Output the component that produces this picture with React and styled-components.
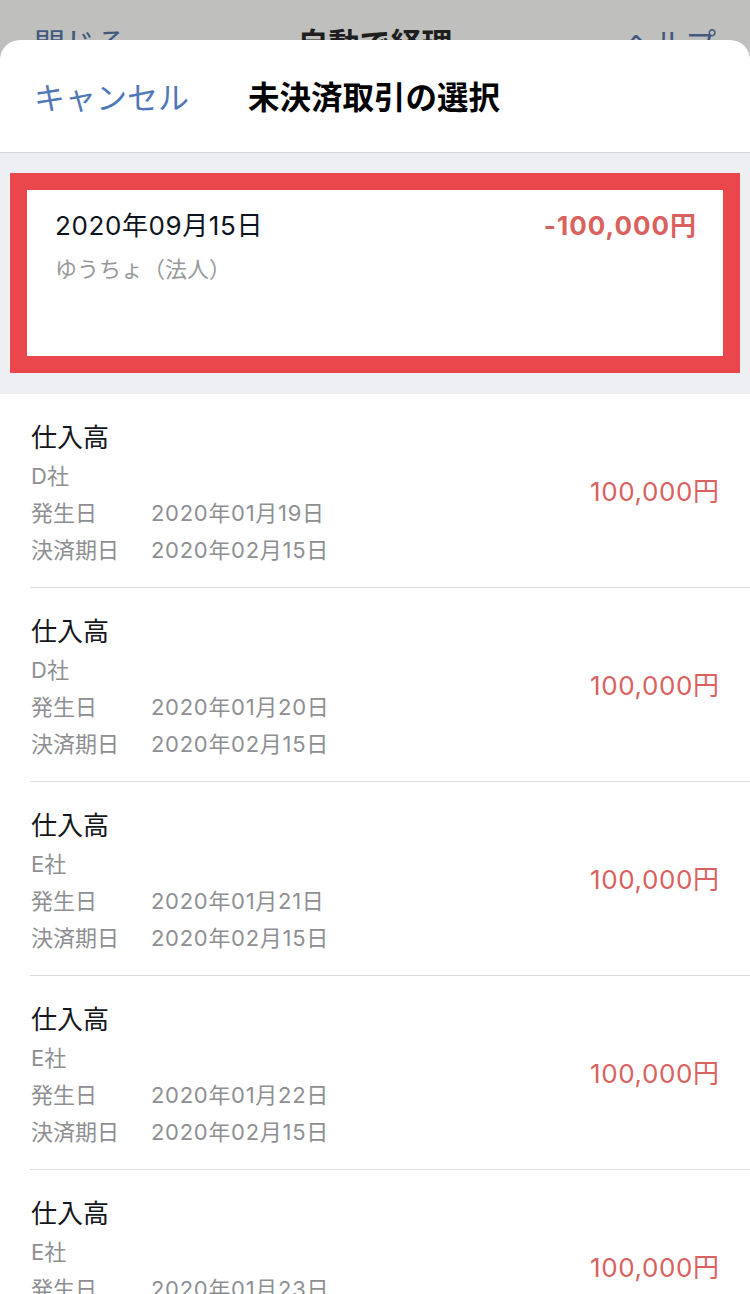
import React from 'react';
import styled, { createGlobalStyle } from 'styled-components';

const GlobalStyle = createGlobalStyle`
    body {
        margin: 0;
        background: #bfc0bd;
        font-family: Inter, "Noto Sans CJK JP", sans-serif;
    }
`

const payables = [
    { account: '仕入高', partner: 'D社', issued: '2020年01月19日', due: '2020年02月15日', amount: '100,000円' },
    { account: '仕入高', partner: 'D社', issued: '2020年01月20日', due: '2020年02月15日', amount: '100,000円' },
    { account: '仕入高', partner: 'E社', issued: '2020年01月21日', due: '2020年02月15日', amount: '100,000円' },
    { account: '仕入高', partner: 'E社', issued: '2020年01月22日', due: '2020年02月15日', amount: '100,000円' },
    { account: '仕入高', partner: 'E社', issued: '2020年01月23日', due: '2020年02月15日', amount: '100,000円' },
]

const App = () => {
    return (
        <Screen>
            <GlobalStyle />
            <BackBar>
                <BackLink>閉じる</BackLink>
                <BackTitle>自動で経理</BackTitle>
                <BackLink>ヘルプ</BackLink>
            </BackBar>
            <Sheet>
                <SheetHeader>
                    <Cancel>キャンセル</Cancel>
                    <SheetTitle>未決済取引の選択</SheetTitle>
                </SheetHeader>
                <SelectedArea>
                    <SelectedCard>
                        <CardTop>
                            <CardDate>2020年09月15日</CardDate>
                            <CardAmount>-100,000円</CardAmount>
                        </CardTop>
                        <CardBank>ゆうちょ（法人）</CardBank>
                    </SelectedCard>
                </SelectedArea>
                <List>
                    {payables.map((p, i) => (
                        <Row key={i}>
                            <RowInner>
                                <RowInfo>
                                    <Account>{p.account}</Account>
                                    <SubLine>{p.partner}</SubLine>
                                    <SubLine><Label>発生日</Label><DateValue>{p.issued}</DateValue></SubLine>
                                    <SubLine><Label>決済期日</Label><DateValue>{p.due}</DateValue></SubLine>
                                </RowInfo>
                                <RowAmount>{p.amount}</RowAmount>
                            </RowInner>
                        </Row>
                    ))}
                </List>
            </Sheet>
        </Screen>
    )
}

export default App;

const Screen = styled.div`
    width: 750px;
    height: 1294px;
    overflow: hidden;
    background: #bfc0bd;
`

const BackBar = styled.div`
    height: 40px;
    overflow: hidden;
    display: flex;
    justify-content: space-between;
    padding: 22px 34px 0;
    box-sizing: border-box;
`

const BackLink = styled.span`
    font-size: 31px;
    line-height: 44px;
    color: #42597d;
`

const BackTitle = styled.span`
    font-size: 31px;
    line-height: 44px;
    font-weight: 700;
    color: #1d1e1d;
`

const Sheet = styled.div`
    background: #fff;
    border-radius: 20px 20px 0 0;
    height: 1254px;
    overflow: hidden;
`

const SheetHeader = styled.div`
    height: 113px;
    box-sizing: border-box;
    border-bottom: 1px solid #d6d6d8;
    display: flex;
    align-items: center;
    padding: 0 34px 2px;
`

const Cancel = styled.span`
    font-size: 31px;
    color: #4f78b8;
    width: 214px;
`

const SheetTitle = styled.h1`
    margin: 0;
    font-size: 31.5px;
    font-weight: 700;
    color: #000;
`

const SelectedArea = styled.div`
    background: #eeeff3;
    padding: 20px 10px 21px;
`

const SelectedCard = styled.div`
    height: 200px;
    box-sizing: border-box;
    border: 17px solid #e9474c;
    background: #fff;
    padding: 16px 27px 0 28px;
`

const CardTop = styled.div`
    display: flex;
    justify-content: space-between;
    align-items: center;
`

const CardDate = styled.span`
    font-size: 26px;
    line-height: 40px;
    letter-spacing: 0.6px;
    color: #0d1320;
`

const CardAmount = styled.span`
    font-size: 26px;
    line-height: 40px;
    font-weight: 700;
    letter-spacing: 1px;
    margin-right: -1px;
    color: #d9625f;
`

const CardBank = styled.div`
    margin-top: 6px;
    font-size: 22px;
    line-height: 34px;
    color: #97989b;
`

const List = styled.div``

const Row = styled.div`
    padding-left: 30px;
`

const RowInner = styled.div`
    display: flex;
    align-items: center;
    justify-content: space-between;
    border-bottom: 1px solid #dcdcde;
    padding: 24px 31px 18px 1px;
    height: 194px;
    box-sizing: border-box;
`

const RowInfo = styled.div`
    display: flex;
    flex-direction: column;
`

const Account = styled.div`
    font-size: 26px;
    line-height: 40px;
    color: #14171c;
`

const SubLine = styled.div`
    font-size: 22px;
    line-height: 37px;
    color: #8e8f93;
    display: flex;
`

const Label = styled.span`
    width: 120px;
`

const DateValue = styled.span`
    letter-spacing: 0.7px;
`

const RowAmount = styled.span`
    font-size: 26px;
    letter-spacing: 0.6px;
    margin-right: -0.6px;
    color: #d9625f;
    margin-top: -8px;
`
